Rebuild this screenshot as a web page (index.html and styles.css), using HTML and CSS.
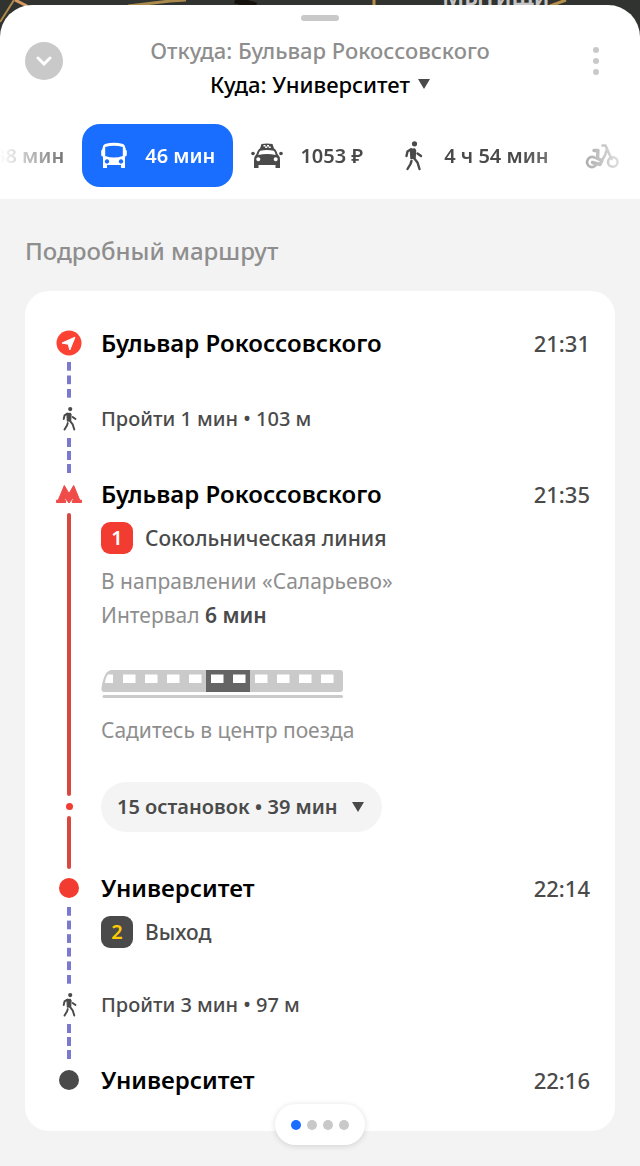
FILE: index.html
```html
<!DOCTYPE html>
<html lang="ru">
<head>
<meta charset="utf-8">
<meta name="viewport" content="width=device-width, initial-scale=1">
<title>Маршрут</title>
<link rel="stylesheet" href="styles.css">
</head>
<body>
<svg class="defs" aria-hidden="true">
  <symbol id="walker" viewBox="0 0 28 32">
    <circle cx="15.500" cy="3.800" r="2.600" fill="currentColor"/>
    <path d="M11.500 9.500L15.500 9L16.500 10.500L16 18L12 18.500Z" fill="currentColor" stroke="currentColor" stroke-width="1.500" stroke-linejoin="round"/>
    <path d="M12 9.300L8.500 11.500L7.500 16M18.500 13.500L22 16M12.500 21L11.500 24L8.500 29M14.500 17.500L18.500 22.500L20.500 29" fill="none" stroke="currentColor" stroke-width="2.400" stroke-linecap="round" stroke-linejoin="round"/>
  </symbol>
  <symbol id="down" viewBox="0 0 12 12"><path d="M0 1h12L6 11z" fill="currentColor"/></symbol>
</svg>
<header class="top">
  <div class="map" aria-hidden="true">
    <svg class="roads" width="640" height="36" viewBox="0 0 640 36" fill="none">
      <path d="M0 22 L14 0" stroke="#b08a4c" stroke-width="2"/>
      <path d="M15 0 L27 6" stroke="#d79a62" stroke-width="3"/>
      <path d="M128 6 L170 1 L186 0" stroke="#a98a4c" stroke-width="3"/>
      <path d="M235 0 L256 6" stroke="#15120e" stroke-width="7"/>
      <path d="M374 0V6M550 6L566 0" stroke="#b5904a" stroke-width="3"/>
    </svg>
    <span class="place">Мытищи</span>
  </div>
  <div class="sheet">
    <div class="handle"></div>
    <div class="route">
      <button class="collapse" aria-label="Свернуть"><svg width="16" height="10" viewBox="0 0 16 10"><path d="M2 2l6 6 6-6" fill="none" stroke="#fff" stroke-width="3" stroke-linecap="round"/></svg></button>
      <div class="points">
        <button class="from">Откуда: Бульвар Рокоссовского</button>
        <button class="to">Куда: Университет <svg class="tri"><use href="#down"/></svg></button>
      </div>
      <button class="more" aria-label="Ещё"><i></i><i></i><i></i></button>
    </div>
    <nav class="tabs" aria-label="Способ передвижения">
      <button class="tab faded">38 мин</button>
      <button class="tab active">
        <svg width="28" height="28" viewBox="0 0 28 28" fill="#fff"><path fill-rule="evenodd" d="M5 2Q14-.500 23 2 25 2.500 25.300 5.500L26 8Q27 8 26.800 10V13Q26.500 14.500 25 14.500V26H21.500Q21 26 21 25V23H7V26H3V14.500Q1.200 14.500 1.200 13V10Q1 8 2 8L2.700 5.500Q3 2.500 5 2ZM5.200 5V14Q14 17 22.800 14V5Q14 2.500 5.200 5ZM7 17.300a2.200 2.200 0 1 0 .01 0ZM21 17.300a2.200 2.200 0 1 0 .01 0Z"/></svg>
        46 мин</button>
      <button class="tab">
        <svg width="32" height="28" viewBox="0 0 32 28" fill="#4a4a4a"><path fill-rule="evenodd" d="M9 6.500L10.500 2Q16 .800 21.500 2L23 6.500Q25 7 26.500 12Q29 14 29 18V26H24.500V23H7.500V26H3V18Q3 14 5.500 12Q7 7 9 6.500ZM9.200 8.800Q8 9.500 7.300 13Q16 10.800 24.700 13Q24 9.500 22.800 8.800Q16 7 9.200 8.800ZM7.300 15.300a2 2 0 1 0 .01 0ZM24.700 15.300a2 2 0 1 0 .01 0Z"/><circle cx="2" cy="11.500" r="1.800"/><circle cx="30" cy="11.500" r="1.800"/><path d="M12.500 3h2v1.500h-2zM16 3h2v1.500h-2zM14.200 4.500h2V6h-2zM17.700 4.500h2V6h-2z" fill="#fff"/></svg>
        1053 ₽</button>
      <button class="tab"><svg width="28" height="32"><use href="#walker"/></svg>4 ч 54 мин</button>
      <button class="tab">
        <svg width="34" height="28" viewBox="0 0 34 28" fill="none" stroke="#4a4a4a" stroke-width="2.600" stroke-linecap="round" stroke-linejoin="round"><circle cx="27.800" cy="20" r="4.800"/><path d="M10.500 16Q6.500 13.500 3.500 16.500Q.500 20.500 3.500 23.700Q7 26.500 10.500 23.500M17.500 3.500H20.500L26.500 17M21.500 8.500Q20.500 13.500 17.500 17.500"/><path d="M9 8.500H13L12.500 16.500L17 18.500L15 22.500L7.500 20.500" stroke-width="3.400"/></svg>
        1 ч 32 мин</button>
    </nav>
  </div>
</header>
<main class="details">
  <h2 class="heading">Подробный маршрут</h2>
  <ol class="card">
    <li class="step">
      <div class="rail"><svg class="mark" width="26" height="26" viewBox="0 0 26 26"><circle cx="13" cy="13" r="12.500" fill="#fb4233"/><path d="M19 7.200L13.800 20L12.300 14.300L6 13z" fill="#fff" stroke="#fff" stroke-linejoin="round"/></svg><span class="walkline"></span></div>
      <div class="body first"><div class="title">Бульвар Рокоссовского</div></div>
      <time class="time">21:31</time>
    </li>
    <li class="step">
      <div class="rail"><svg class="mark" width="26" height="26"><use href="#walker"/></svg><span class="walkline"></span></div>
      <div class="body"><div class="text">Пройти 1 мин • 103 м</div></div>
    </li>
    <li class="step ride">
      <div class="rail"><svg class="mark" width="26" height="26" viewBox="0 0 26 26"><path d="M8.300 4.500L13 12.500L17.700 4.500L23.800 19.200H25.500V21.500H16.300V19.200H17.500L16.700 17L13 22L9.300 17L8.500 19.200H9.700V21.500H.500V19.200H2.200Z" fill="#ef4b48" stroke="#ef4b48"/></svg><span class="metroline"></span></div>
      <div class="body">
        <div class="title">Бульвар Рокоссовского</div>
        <div class="line"><span class="badge metro">1</span><span>Сокольническая линия</span></div>
        <p class="note">В направлении «Саларьево»<br>Интервал <b>6 мин</b></p>
        <svg class="train" width="243" height="30" viewBox="0 0 243 30"><path d="M11 0H239Q242 0 242 3V19Q242 22 239 22H3Q0 22 .500 18Q3 0 11 0Z" fill="#cacaca"/><path d="M105 0H149V22H105Z" fill="#656565"/><path d="M7 4.500H12V13H4Q4.500 7 7 4.500ZM22 4.500h12.500v8.500h-12.500zM44 4.500h12.500v8.500h-12.500zM66 4.500h12.500v8.500h-12.500zM88 4.500h12.500v8.500h-12.500zM110 4.500h12.500v8.500h-12.500zM132 4.500h12.500v8.500h-12.500zM154 4.500h12.500v8.500h-12.500zM176 4.500h12.500v8.500h-12.500zM198 4.500h12.500v8.500h-12.500zM220 4.500h12.500v8.500h-12.500z" fill="#fff"/><path d="M3 26.500H240.500" stroke="#cacaca" stroke-width="3" stroke-linecap="round"/></svg>
        <p class="note">Садитесь в центр поезда</p>
      </div>
      <time class="time">21:35</time>
    </li>
    <li class="step">
      <div class="rail"><span class="metroline short"></span><span class="stopdot"></span><span class="metroline"></span></div>
      <div class="body stops"><button class="expand">15 остановок • 39 мин <svg class="tri"><use href="#down"/></svg></button></div>
    </li>
    <li class="step">
      <div class="rail"><span class="mark dot red"></span><span class="walkline"></span></div>
      <div class="body exit"><div class="title">Университет</div><div class="line"><span class="badge out">2</span><span>Выход</span></div></div>
      <time class="time">22:14</time>
    </li>
    <li class="step">
      <div class="rail"><svg class="mark" width="26" height="26"><use href="#walker"/></svg><span class="walkline"></span></div>
      <div class="body"><div class="text">Пройти 3 мин • 97 м</div></div>
    </li>
    <li class="step">
      <div class="rail"><span class="mark dot"></span></div>
      <div class="body last"><div class="title">Университет</div></div>
      <time class="time">22:16</time>
    </li>
  </ol>
  <div class="pager"><i class="on"></i><i></i><i></i><i></i></div>
</main>
</body>
</html>
```
FILE: styles.css
```css
* { box-sizing: border-box; margin: 0; padding: 0; }
body { font: 500 21px/34px "Noto Sans", sans-serif; color: #4a4a4a; background: #f3f3f3; min-height: 100vh; display: flex; flex-direction: column; }
button { font: inherit; color: inherit; background: none; border: 0; cursor: pointer; }
svg { flex: none; display: block; }
.defs { position: absolute; width: 0; height: 0; }

.top { position: relative; padding-top: 5px; background: #30332f; overflow: hidden; }
.map { position: absolute; inset: 0; overflow: hidden; }
.place { position: absolute; left: 442px; top: -17px; font-size: 24px; line-height: 26px; font-weight: 600; color: #c4c4c4; }
.sheet { position: relative; background: #fff; border-radius: 32px 32px 0 0; padding: 10px 0 12px; }
.handle { width: 38px; height: 6px; border-radius: 3px; background: #c9c9c9; margin: 0 auto; }
.route { display: flex; align-items: flex-start; justify-content: space-between; padding: 12px 25px 0; }
.collapse { width: 38px; height: 38px; margin-top: 9px; border-radius: 50%; background: #c9c9c9; display: grid; place-items: center; }
.points { display: flex; flex-direction: column; align-items: center; font-size: 22px; }
.from { color: #8e8e8e; }
.to { color: #000; display: flex; align-items: center; gap: 8px; }
.tri { width: 12px; height: 12px; color: #4a4a4a; }
.more { width: 38px; height: 38px; margin-top: 9px; display: flex; flex-direction: column; align-items: center; justify-content: center; gap: 5px; }
.more i { width: 6px; height: 6px; border-radius: 50%; background: #c9c9c9; }

.tabs { display: flex; margin-top: 23px; overflow: hidden; -webkit-mask-image: linear-gradient(90deg, transparent, #000 82px, #000 calc(100% - 120px), transparent); mask-image: linear-gradient(90deg, transparent, #000 82px, #000 calc(100% - 120px), transparent); }
.tab { flex: none; height: 63px; padding: 0 18px; display: flex; align-items: center; gap: 17px; white-space: nowrap; border-radius: 18px; font-size: 20px; font-weight: 600; }
.tab.faded { margin-left: -24px; }
.tab.active { background: #196dff; color: #fff; }

.details { position: relative; flex: 1; padding: 35px 25px; }
.heading { font-size: 24px; line-height: 34px; font-weight: 500; color: #8e8e8e; }
.card { list-style: none; margin-top: 23px; padding: 39px 25px 38px 31px; background: #fff; border-radius: 24px; }
.step { display: flex; gap: 19px; }
.rail { flex: none; width: 26px; display: flex; flex-direction: column; align-items: center; }
.mark { flex: none; width: 26px; height: 26px; }
.dot { width: 20px; height: 20px; margin: 3px; border-radius: 50%; background: #4a4a4a; }
.dot.red { background: #f33c31; }
.walkline { flex: 1; width: 4px; margin: 6px 0 5px; background: linear-gradient(#7b78cf 9px, transparent 9px) 0 0 / 4px 12px space; }
.metroline { flex: 1; width: 4px; border-radius: 2px; margin-bottom: 6px; background: #d9483f; }
.ride .metroline { margin: 6px 0 0; border-radius: 2px 2px 0 0; }
.metroline.short { flex: none; height: 14px; margin: 0; border-radius: 0 0 2px 2px; }
.stopdot { width: 7px; height: 7px; margin: 7px 0 6px; border-radius: 50%; background: #f33c31; }
.body { flex: 1; padding-bottom: 49px; }
.body.first { padding-bottom: 50px; }
.body.stops { padding-bottom: 43px; }
.body.exit { padding-bottom: 44px; }
.body.last, .ride .body { padding-bottom: 0; }
.title { font-size: 24px; line-height: 26px; font-weight: 600; color: #000; }
.text { font-size: 20px; line-height: 26px; }
.time { font-size: 22px; line-height: 26px; }
.line { display: flex; align-items: center; gap: 12px; margin-top: 15px; line-height: 32px; }
.badge { width: 32px; height: 32px; border-radius: 9px; font-size: 20px; text-align: center; font-weight: 600; }
.badge.metro { background: #f33c31; color: #fff; }
.badge.out { background: #4a4a4a; color: #fc0; }
.note { margin-top: 10px; color: #8e8e8e; font-weight: 400; }
.note b { color: #4a4a4a; font-weight: 600; }
.train { margin-top: 38px; }
.train + .note { margin: 13px 0 35px; }
.expand { height: 50px; padding: 0 18px 0 16px; border-radius: 25px; background: #f4f4f4; display: flex; align-items: center; gap: 14px; font-size: 20px; font-weight: 600; }
.pager { position: absolute; left: 50%; bottom: 21px; transform: translateX(-50%); height: 41px; padding: 0 16px; border-radius: 21px; background: #fff; box-shadow: 0 1px 6px rgba(0,0,0,.14); display: flex; align-items: center; gap: 6px; }
.pager i { width: 10px; height: 10px; border-radius: 50%; background: #c9c9c9; }
.pager .on { background: #196dff; }
```
